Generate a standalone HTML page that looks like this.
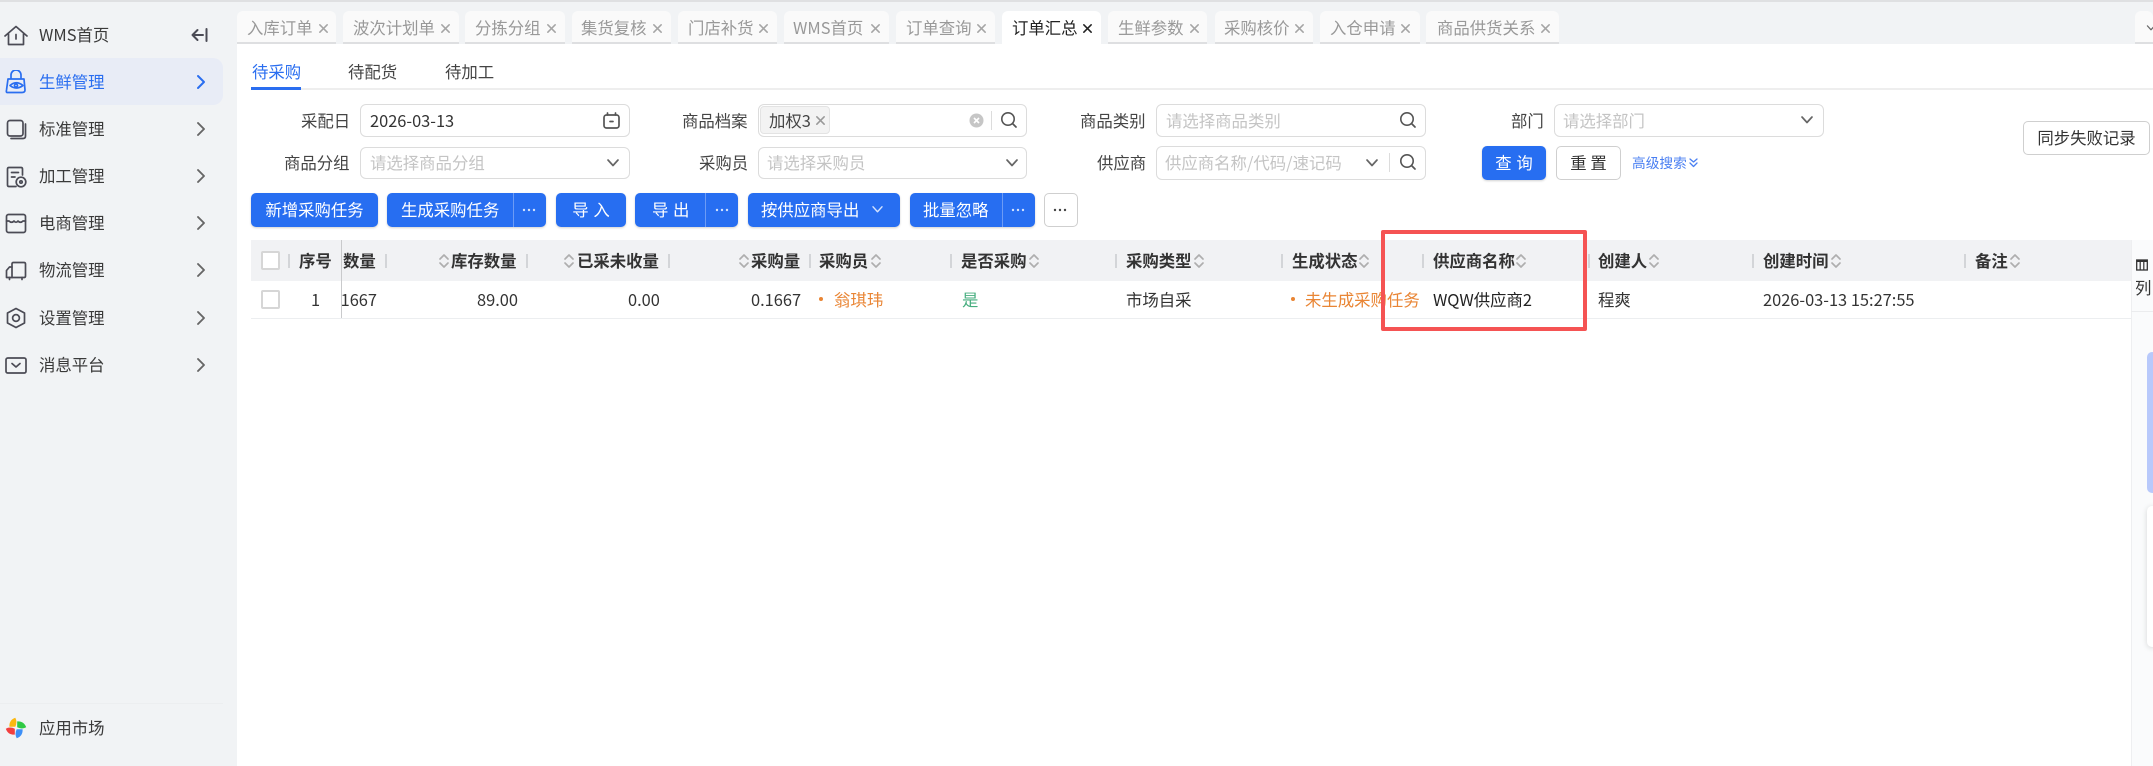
<!DOCTYPE html>
<html lang="zh">
<head>
<meta charset="utf-8">
<title>订单汇总</title>
<style>
html,body{margin:0;padding:0;width:2153px;height:766px;overflow:hidden;background:#fff}
#root{position:relative;width:2153px;height:766px;overflow:hidden;background:#fff;font-family:"Noto Sans CJK SC","Liberation Sans",sans-serif;color:#333;filter:blur(.35px)}
#root div,#root svg{position:absolute;box-sizing:border-box}
.t{white-space:nowrap;line-height:24px;height:24px;font-size:16.4px;margin-top:-1px}
.m{color:#3a3a3a}
.tab{top:11px;height:33px;background:#fafafa;border-radius:6px 6px 0 0;border-bottom:2px solid #dedfe1}
.g{color:#999}
.l{color:#444}
.p{color:#c4c4c4}
.b{font-weight:700;color:#333}
.in{border:1.4px solid #dcdcdc;border-radius:6px;background:#fff}
.btn{top:193px;height:34px;background:#276ef1;border-radius:5px;box-shadow:0 1px 2px rgba(0,0,0,.18);color:#fff;text-align:center;line-height:32px;font-size:16.4px;white-space:nowrap;word-spacing:1px}
.sp{top:193px;width:1px;height:34px;background:#6c9bf5}
.w{border:1.4px solid #cfcfcf;border-radius:5px;background:#fff;color:#333;text-align:center;white-space:nowrap;font-size:16.4px}
.sep{top:254px;width:2px;height:14px;background:#d3d5d8}
.cb{left:261px;width:19px;height:19px;border:2px solid #d6d6d6;border-radius:2px;background:#fff}
.s{top:253px;width:12px;height:16px}
.i{fill:none;stroke:#4b4b55;stroke-width:1.7;stroke-linecap:round;stroke-linejoin:round}
</style>
</head>
<body>
<div id="root">
<svg width="0" height="0" style="left:0;top:0">
<defs>
<symbol id="sort" viewBox="0 0 12 16"><path d="M2 6 L6 2 L10 6 M2 10 L6 14 L10 10" fill="none" stroke="#aeaeae" stroke-width="1.7" stroke-linecap="round" stroke-linejoin="round"/></symbol>
<symbol id="x" viewBox="0 0 12 12"><path d="M2 2 L10 10 M10 2 L2 10" fill="none" stroke="currentColor" stroke-width="1.7" stroke-linecap="round"/></symbol>
<symbol id="ch" viewBox="0 0 14 10"><path d="M2 2 L7 7.5 L12 2" fill="none" stroke="#666" stroke-width="1.7" stroke-linecap="round" stroke-linejoin="round"/></symbol>
<symbol id="q" viewBox="0 0 18 18"><circle cx="8" cy="8" r="6.2" fill="none" stroke="#555" stroke-width="1.6"/><path d="M12.6 12.6 L16 16" stroke="#555" stroke-width="1.7" stroke-linecap="round"/></symbol>
<symbol id="rt" viewBox="0 0 10 16"><path d="M2 2 L8 8 L2 14" fill="none" stroke="#666" stroke-width="1.9" stroke-linecap="round" stroke-linejoin="round"/></symbol>
<symbol id="dots" viewBox="0 0 14 4"><circle cx="2" cy="2" r="1.2"/><circle cx="7" cy="2" r="1.2"/><circle cx="12" cy="2" r="1.2"/></symbol>
</defs>
</svg>

<!-- frame -->
<div style="left:0;top:0;width:2153px;height:2px;background:#dfe0e2;z-index:3"></div>
<div style="left:0;top:0;width:237px;height:766px;background:#f1f3f5"></div>
<div style="left:237px;top:0;width:1916px;height:44px;background:#f1f3f5"></div>

<!-- sidebar -->
<div style="left:0;top:58px;width:223px;height:47px;background:#e8ecf6;border-radius:0 10px 10px 0"></div>
<svg class="i" style="left:4px;top:25px" width="24" height="21" viewBox="0 0 24 21"><path d="M1 11 L12 1.5 L23 11 M4.5 9 V19.5 H19.5 V9"/><path d="M12 9.5 V14"/></svg>
<div class="t m" style="left:39px;top:23px">WMS首页</div>
<svg class="i" style="left:191px;top:28px;stroke-width:2" width="17" height="14" viewBox="0 0 17 14"><path d="M15.5 1 V13 M12 7 H2 M6.5 2 L1.5 7 L6.5 12"/></svg>

<svg class="i" style="left:5px;top:70px;stroke:#2a6ef0" width="22" height="24" viewBox="0 0 22 24"><path d="M6 8 V5 A4 4 0 0 1 16 5 V8"/><path d="M3 9 H19 L20 20 Q20 22.5 17 22.5 H2 Q1 22.5 1.5 20 Z"/><path d="M5 15.5 Q11 10 18 15.5 Q11 20.5 5 15.5 Z"/><circle cx="11" cy="15.5" r="1.5"/></svg>
<div class="t" style="left:39px;top:70px;color:#2a6ef0">生鲜管理</div>
<svg style="left:196px;top:74px" width="10" height="16" viewBox="0 0 10 16"><path d="M2 2 L8 8 L2 14" fill="none" stroke="#2a6ef0" stroke-width="2" stroke-linecap="round" stroke-linejoin="round"/></svg>

<svg class="i" style="left:6px;top:119px" width="21" height="21" viewBox="0 0 21 21"><rect x="1.5" y="1.5" width="15.5" height="15.5" rx="2.5"/><path d="M19.5 5 V17 Q19.5 19.5 17 19.5 H5"/></svg>
<div class="t m" style="left:39px;top:117px">标准管理</div>
<svg style="left:196px;top:121px" width="10" height="16"><use href="#rt"/></svg>

<svg class="i" style="left:6px;top:166px" width="21" height="22" viewBox="0 0 21 22"><path d="M10 20.5 H3 Q1.5 20.5 1.5 19 V3 Q1.5 1.5 3 1.5 H15 Q16.5 1.5 16.5 3 V9"/><path d="M5.5 6.5 H12.5 M5.5 11 H9"/><circle cx="15" cy="16" r="4.8"/><circle cx="15" cy="16" r="1.2"/></svg>
<div class="t m" style="left:39px;top:164px">加工管理</div>
<svg style="left:196px;top:168px" width="10" height="16"><use href="#rt"/></svg>

<svg class="i" style="left:5px;top:213px" width="22" height="21" viewBox="0 0 22 21"><rect x="1.5" y="1.5" width="19" height="18" rx="2"/><path d="M1.5 8 H4 Q6.5 10.5 9 8 Q11 10.5 13 8 Q15.5 10.5 18 8 H20.5"/></svg>
<div class="t m" style="left:39px;top:211px">电商管理</div>
<svg style="left:196px;top:215px" width="10" height="16"><use href="#rt"/></svg>

<svg class="i" style="left:5px;top:261px" width="22" height="20" viewBox="0 0 22 20"><path d="M7 16.5 V3 Q7 1.5 8.5 1.5 H19 Q20.5 1.5 20.5 3 V15 Q20.5 16.5 19 16.5 H7 Z"/><path d="M7 6 H4.5 L1.5 9.5 V16.5 H7"/><path d="M4.5 16.5 V18.5 M17 16.5 V18.5"/></svg>
<div class="t m" style="left:39px;top:258px">物流管理</div>
<svg style="left:196px;top:262px" width="10" height="16"><use href="#rt"/></svg>

<svg class="i" style="left:6px;top:307px" width="20" height="22" viewBox="0 0 20 22"><path d="M10 1.5 L18.5 6 V16 L10 20.5 L1.5 16 V6 Z"/><circle cx="10" cy="11" r="3.4"/></svg>
<div class="t m" style="left:39px;top:306px">设置管理</div>
<svg style="left:196px;top:310px" width="10" height="16"><use href="#rt"/></svg>

<svg class="i" style="left:5px;top:357px" width="22" height="17" viewBox="0 0 22 17"><rect x="1" y="1" width="20" height="15" rx="1.8"/><path d="M7 6.5 L11 10 L15 6.5"/></svg>
<div class="t m" style="left:39px;top:353px">消息平台</div>
<svg style="left:196px;top:357px" width="10" height="16"><use href="#rt"/></svg>

<div style="left:0;top:703px;width:223px;height:1px;background:#eceef0"></div>
<svg style="left:5px;top:717px" width="22" height="22" viewBox="0 0 22 22">
<path d="M10.3 9.8 L4.4 9.8 Q4 3 10.3 .8 Q12.6 5 10.3 9.8 Z" fill="#fbb80f"/>
<path d="M10.3 9.8 L4.4 9.8 Q4 3 10.3 .8 Q12.6 5 10.3 9.8 Z" fill="#2fc944" transform="rotate(90 11 11)"/>
<path d="M10.3 9.8 L4.4 9.8 Q4 3 10.3 .8 Q12.6 5 10.3 9.8 Z" fill="#3d8ff7" transform="rotate(180 11 11)"/>
<path d="M10.3 9.8 L4.4 9.8 Q4 3 10.3 .8 Q12.6 5 10.3 9.8 Z" fill="#f23f3f" transform="rotate(270 11 11)"/>
</svg>
<div class="t m" style="left:39px;top:716px">应用市场</div>

<!-- tabs -->
<div class="tab" style="left:237px;width:99px"></div><div class="t g" style="left:247px;top:16px">入库订单</div><svg style="left:318px;top:23px;color:#a5a5a5" width="11" height="11"><use href="#x"/></svg>
<div class="tab" style="left:343px;width:116px"></div><div class="t g" style="left:353px;top:16px">波次计划单</div><svg style="left:440px;top:23px;color:#a5a5a5" width="11" height="11"><use href="#x"/></svg>
<div class="tab" style="left:465px;width:100px"></div><div class="t g" style="left:475px;top:16px">分拣分组</div><svg style="left:546px;top:23px;color:#a5a5a5" width="11" height="11"><use href="#x"/></svg>
<div class="tab" style="left:572px;width:99px"></div><div class="t g" style="left:581px;top:16px">集货复核</div><svg style="left:652px;top:23px;color:#a5a5a5" width="11" height="11"><use href="#x"/></svg>
<div class="tab" style="left:678px;width:99px"></div><div class="t g" style="left:688px;top:16px">门店补货</div><svg style="left:758px;top:23px;color:#a5a5a5" width="11" height="11"><use href="#x"/></svg>
<div class="tab" style="left:784px;width:105px"></div><div class="t g" style="left:793px;top:16px">WMS首页</div><svg style="left:870px;top:23px;color:#a5a5a5" width="11" height="11"><use href="#x"/></svg>
<div class="tab" style="left:896px;width:99px"></div><div class="t g" style="left:906px;top:16px">订单查询</div><svg style="left:976px;top:23px;color:#a5a5a5" width="11" height="11"><use href="#x"/></svg>
<div class="tab" style="left:1002px;width:99px;height:33px;background:#fff;border-bottom:0"></div><div class="t" style="left:1012px;top:16px;color:#222">订单汇总</div><svg style="left:1082px;top:23px;color:#222" width="11" height="11"><use href="#x"/></svg>
<div class="tab" style="left:1108px;width:99px"></div><div class="t g" style="left:1118px;top:16px">生鲜参数</div><svg style="left:1189px;top:23px;color:#a5a5a5" width="11" height="11"><use href="#x"/></svg>
<div class="tab" style="left:1215px;width:98px"></div><div class="t g" style="left:1224px;top:16px">采购核价</div><svg style="left:1294px;top:23px;color:#a5a5a5" width="11" height="11"><use href="#x"/></svg>
<div class="tab" style="left:1320px;width:100px"></div><div class="t g" style="left:1330px;top:16px">入仓申请</div><svg style="left:1400px;top:23px;color:#a5a5a5" width="11" height="11"><use href="#x"/></svg>
<div class="tab" style="left:1426px;width:133px"></div><div class="t g" style="left:1437px;top:16px">商品供货关系</div><svg style="left:1540px;top:23px;color:#a5a5a5" width="11" height="11"><use href="#x"/></svg>
<div class="tab" style="left:2135px;width:18px"></div>
<svg style="left:2146px;top:24px" width="10" height="8"><use href="#ch"/></svg>

<!-- sub tabs -->
<div style="left:251px;top:88px;width:1902px;height:2px;background:#eeeeee"></div>
<div style="left:251px;top:87px;width:50px;height:3px;background:#2a6ef0"></div>
<div class="t" style="left:252px;top:60px;color:#2a6ef0">待采购</div>
<div class="t l" style="left:348px;top:60px">待配货</div>
<div class="t l" style="left:445px;top:60px">待加工</div>

<!-- form row 1 -->
<div class="t l" style="left:301px;top:109px">采配日</div>
<div class="in" style="left:360px;top:104px;width:270px;height:33px"></div>
<div class="t" style="left:370px;top:109px;color:#333">2026-03-13</div>
<svg class="i" style="left:603px;top:112px;stroke:#555" width="17" height="17" viewBox="0 0 17 17"><rect x="1" y="3" width="15" height="13" rx="2.5"/><path d="M4.5 1 V3 M12.5 1 V3 M7 9.5 H10"/></svg>

<div class="t l" style="left:682px;top:109px">商品档案</div>
<div class="in" style="left:758px;top:104px;width:269px;height:33px"></div>
<div style="left:760px;top:106px;width:70px;height:28px;background:#f3f3f3;border:1px solid #e3e3e3;border-radius:4px"></div>
<div class="t" style="left:769px;top:109px;color:#444">加权3</div>
<svg style="left:815px;top:115px;color:#999" width="11" height="11"><use href="#x"/></svg>
<svg style="left:969px;top:113px" width="15" height="15" viewBox="0 0 15 15"><circle cx="7.5" cy="7.5" r="7" fill="#c6c6c6"/><path d="M5 5 L10 10 M10 5 L5 10" stroke="#fff" stroke-width="1.6"/></svg>
<div style="left:991px;top:111px;width:1px;height:19px;background:#dcdcdc"></div>
<svg style="left:1000px;top:111px" width="18" height="18"><use href="#q"/></svg>

<div class="t l" style="left:1080px;top:109px">商品类别</div>
<div class="in" style="left:1156px;top:104px;width:270px;height:33px"></div>
<div class="t p" style="left:1166px;top:109px">请选择商品类别</div>
<svg style="left:1399px;top:111px" width="18" height="18"><use href="#q"/></svg>

<div class="t l" style="left:1511px;top:109px">部门</div>
<div class="in" style="left:1554px;top:104px;width:270px;height:33px"></div>
<div class="t p" style="left:1563px;top:109px">请选择部门</div>
<svg style="left:1800px;top:115px" width="14" height="10"><use href="#ch"/></svg>

<div class="w" style="left:2023px;top:121px;width:127px;height:34px;line-height:31px">同步失败记录</div>

<!-- form row 2 -->
<div class="t l" style="left:284px;top:151px">商品分组</div>
<div class="in" style="left:360px;top:147px;width:270px;height:32px"></div>
<div class="t p" style="left:370px;top:151px">请选择商品分组</div>
<svg style="left:606px;top:158px" width="14" height="10"><use href="#ch"/></svg>

<div class="t l" style="left:699px;top:151px">采购员</div>
<div class="in" style="left:758px;top:147px;width:269px;height:32px"></div>
<div class="t p" style="left:767px;top:151px">请选择采购员</div>
<svg style="left:1005px;top:158px" width="14" height="10"><use href="#ch"/></svg>

<div class="t l" style="left:1097px;top:151px">供应商</div>
<div class="in" style="left:1156px;top:146px;width:270px;height:34px"></div>
<div class="t p" style="left:1165px;top:151px">供应商名称/代码/速记码</div>
<svg style="left:1365px;top:158px" width="14" height="10"><use href="#ch"/></svg>
<div style="left:1389px;top:153px;width:1px;height:19px;background:#dcdcdc"></div>
<svg style="left:1399px;top:153px" width="18" height="18"><use href="#q"/></svg>

<div class="btn" style="left:1482px;top:146px;width:64px;height:34px;line-height:32px">查 询</div>
<div class="w" style="left:1556px;top:146px;width:65px;height:34px;line-height:31px">重 置</div>
<div class="t" style="left:1632px;top:151px;font-size:13.7px;color:#4a7ff2">高级搜索</div>
<svg style="left:1688px;top:157px" width="11" height="12" viewBox="0 0 11 12" fill="none" stroke="#4a7ff2" stroke-width="1.3" stroke-linecap="round" stroke-linejoin="round"><path d="M2 2 L5.5 5 L9 2 M2 6 L5.5 9.5 L9 6"/></svg>

<!-- action buttons -->
<div class="btn" style="left:251px;width:127px">新增采购任务</div>
<div class="btn" style="left:387px;width:159px;text-align:left;padding-left:14px">生成采购任务</div>
<div class="sp" style="left:513px"></div>
<svg style="left:522px;top:208px;fill:#d5e3fd" width="14" height="4"><use href="#dots"/></svg>
<div class="btn" style="left:556px;width:70px">导 入</div>
<div class="btn" style="left:635px;width:103px;text-align:left;padding-left:17px">导 出</div>
<div class="sp" style="left:705px"></div>
<svg style="left:715px;top:208px;fill:#d5e3fd" width="14" height="4"><use href="#dots"/></svg>
<div class="btn" style="left:748px;width:152px;text-align:left;padding-left:13px">按供应商导出</div>
<svg style="left:871px;top:205px" width="13" height="9" viewBox="0 0 14 10"><path d="M2 2 L7 7.5 L12 2" fill="none" stroke="#d5e3fd" stroke-width="1.6" stroke-linecap="round" stroke-linejoin="round"/></svg>
<div class="btn" style="left:910px;width:125px;text-align:left;padding-left:13px">批量忽略</div>
<div class="sp" style="left:1002px"></div>
<svg style="left:1011px;top:208px;fill:#d5e3fd" width="14" height="4"><use href="#dots"/></svg>
<div class="w" style="left:1044px;top:193px;width:34px;height:34px"></div>
<svg style="left:1053px;top:208px;fill:#444" width="14" height="4"><use href="#dots"/></svg>

<!-- table -->
<div style="left:251px;top:240px;width:1880px;height:41px;background:#f1f2f4"></div>
<div style="left:251px;top:318px;width:1880px;height:1px;background:#eceef0"></div>
<div class="cb" style="top:251px"></div>
<div class="cb" style="top:290px"></div>
<div class="sep" style="left:288px"></div>
<div class="t b" style="left:299px;top:249px">序号</div>
<div class="t b" style="left:343px;top:249px">数量</div>
<div style="left:341px;top:240px;width:1px;height:78px;background:#c9cacc"></div>
<div class="sep" style="left:385px"></div>
<svg class="s" style="left:438px"><use href="#sort"/></svg>
<div class="t b" style="left:451px;top:249px">库存数量</div>
<div class="sep" style="left:526px"></div>
<svg class="s" style="left:563px"><use href="#sort"/></svg>
<div class="t b" style="left:577px;top:249px">已采未收量</div>
<div class="sep" style="left:668px"></div>
<svg class="s" style="left:738px"><use href="#sort"/></svg>
<div class="t b" style="left:751px;top:249px">采购量</div>
<div class="sep" style="left:809px"></div>
<div class="t b" style="left:819px;top:249px">采购员</div>
<svg class="s" style="left:870px"><use href="#sort"/></svg>
<div class="sep" style="left:950px"></div>
<div class="t b" style="left:961px;top:249px">是否采购</div>
<svg class="s" style="left:1028px"><use href="#sort"/></svg>
<div class="sep" style="left:1115px"></div>
<div class="t b" style="left:1126px;top:249px">采购类型</div>
<svg class="s" style="left:1193px"><use href="#sort"/></svg>
<div class="sep" style="left:1281px"></div>
<div class="t b" style="left:1292px;top:249px">生成状态</div>
<svg class="s" style="left:1358px"><use href="#sort"/></svg>
<div class="sep" style="left:1422px"></div>
<div class="t b" style="left:1433px;top:249px">供应商名称</div>
<svg class="s" style="left:1515px"><use href="#sort"/></svg>
<div class="sep" style="left:1588px"></div>
<div class="t b" style="left:1598px;top:249px">创建人</div>
<svg class="s" style="left:1648px"><use href="#sort"/></svg>
<div class="sep" style="left:1752px"></div>
<div class="t b" style="left:1763px;top:249px">创建时间</div>
<svg class="s" style="left:1830px"><use href="#sort"/></svg>
<div class="sep" style="left:1964px"></div>
<div class="t b" style="left:1975px;top:249px">备注</div>
<svg class="s" style="left:2009px"><use href="#sort"/></svg>

<!-- row -->
<div class="t" style="left:311px;top:288px">1</div>
<div style="left:341px;top:287px;width:36px;height:24px;overflow:hidden"><div class="t" style="right:0;top:0;margin-top:0">0.1667</div></div>
<div class="t" style="left:477px;top:288px">89.00</div>
<div class="t" style="left:628px;top:288px">0.00</div>
<div class="t" style="left:751px;top:288px">0.1667</div>
<div style="left:819px;top:297px;width:4px;height:4px;border-radius:50%;background:#e98534"></div>
<div class="t" style="left:834px;top:288px;color:#e98534">翁琪玮</div>
<div class="t" style="left:962px;top:288px;color:#45ad7e">是</div>
<div class="t" style="left:1126px;top:288px">市场自采</div>
<div style="left:1291px;top:297px;width:4px;height:4px;border-radius:50%;background:#e98534"></div>
<div class="t" style="left:1305px;top:288px;color:#e98534">未生成采购任务</div>
<div class="t" style="left:1433px;top:288px;color:#222">WQW供应商2</div>
<div class="t" style="left:1598px;top:288px">程爽</div>
<div class="t" style="left:1763px;top:288px">2026-03-13 15:27:55</div>

<!-- right panel -->
<div style="left:2131px;top:240px;width:22px;height:526px;background:#fafbfc;border-left:1px solid #eeeff1"></div>
<div style="left:2131px;top:311px;width:22px;height:1px;background:#ebecee"></div>
<svg style="left:2136px;top:259px" width="12" height="12" viewBox="0 0 12 12"><rect x=".7" y="1" width="10.6" height="10" fill="none" stroke="#333" stroke-width="1.3"/><path d="M.7 2 H11.3" stroke="#333" stroke-width="2"/><path d="M4.2 1 V11 M7.8 1 V11" stroke="#333" stroke-width="1.2"/></svg>
<div class="t" style="left:2135px;top:276px;color:#333">列</div>
<div style="left:2147px;top:352px;width:10px;height:141px;background:#b8c9fb;border-radius:5px"></div>
<div style="left:2147px;top:506px;width:10px;height:141px;background:#fff;border-radius:5px;box-shadow:0 1px 6px rgba(0,0,0,.15)"></div>

<!-- red annotation -->
<div style="left:1381px;top:230px;width:206px;height:101px;border:4px solid #f55353;border-radius:2px;z-index:5"></div>
</div>
</body>
</html>
